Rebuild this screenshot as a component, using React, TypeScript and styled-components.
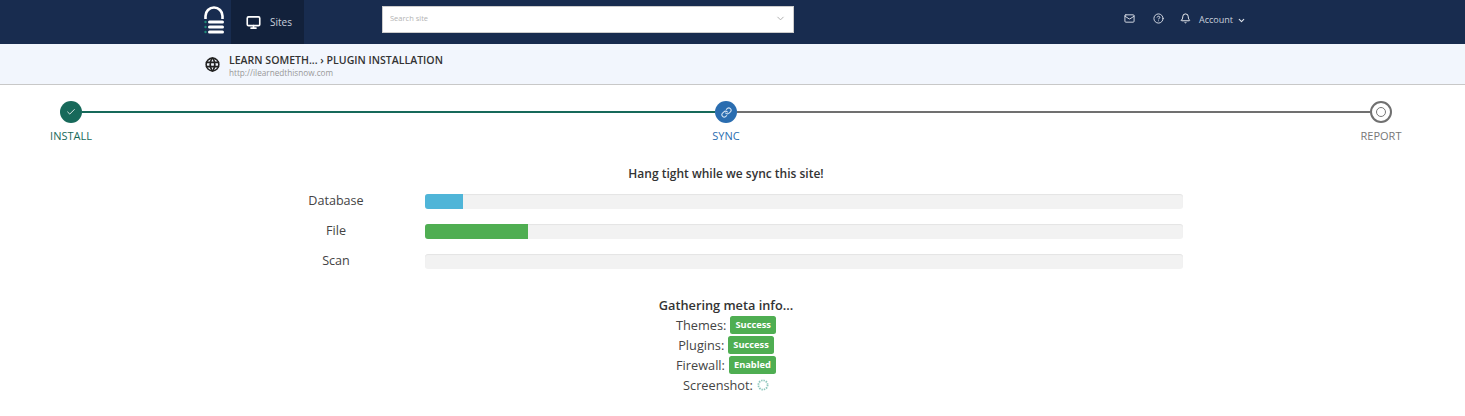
import React from 'react';
import styled, { createGlobalStyle } from 'styled-components';
import { Monitor, Mail, CircleHelp, Bell, ChevronDown, Check, Link } from 'lucide-react';
import { TbWorld } from 'react-icons/tb';

const GlobalStyle = createGlobalStyle`
  html, body { margin: 0; padding: 0; background: #fff; }
  body { font-family: "Open Sans", sans-serif; color: #333; overflow: hidden; }
`;

const TopBar = styled.header`
  height: 44px;
  background: #182c4f;
  display: flex;
  align-items: stretch;
  padding-left: 196px;
`;

const LogoCell = styled.div`
  width: 35px;
  display: flex;
  align-items: center;
  justify-content: center;
`;

const SitesTab = styled.div`
  width: 73px;
  background: #12213b;
  display: flex;
  align-items: center;
  padding-left: 15px;
  box-sizing: border-box;
  gap: 9px;
  color: #c9d0dc;
  font-size: 10px;
`;

const SearchBox = styled.div`
  margin: 6px 0 0 78px;
  width: 412px;
  height: 27px;
  box-sizing: border-box;
  background: #fff;
  border: 1px solid #ccc;
  display: flex;
  align-items: center;
  justify-content: space-between;
  padding: 0 7px 3px;
  font-size: 7.5px;
  color: #b4b4b4;
`;

const TopActions = styled.div`
  margin-left: 330px;
  display: flex;
  align-items: center;
  color: #dfe4ec;
  height: 37px;
`;

const IconSlot = styled.span<{ $w: number }>`
  width: ${(p) => p.$w}px;
  display: flex;
  margin-top: -1px;
`;

const AccountText = styled.span`
  font-size: 9px;
  color: #c9d0dc;
  margin-right: 3px;
  margin-top: 1px;
`;

const Crumbs = styled.div`
  height: 40px;
  background: #f2f6fd;
  border-bottom: 1px solid #c8c8c8;
  padding: 0 0 0 204px;
  display: flex;
  align-items: center;
  gap: 8px;
  color: #333;
`;

const CrumbText = styled.div`
  display: flex;
  flex-direction: column;
  padding-top: 3px;
`;

const CrumbTitle = styled.div`
  font-size: 10.55px;
  font-weight: 600;
  line-height: 14px;
  color: #333;
`;

const CrumbUrl = styled.div`
  font-size: 8.2px;
  line-height: 11px;
  color: #999;
`;

const Stepper = styled.div`
  display: flex;
  align-items: flex-start;
  padding: 16px 73px 0 60px;
  height: 60px;
  box-sizing: border-box;
`;

const Step = styled.div<{ $color: string }>`
  position: relative;
  width: 22px;
  flex: none;
  display: flex;
  flex-direction: column;
  align-items: center;
  color: ${(p) => p.$color};
`;

const Circle = styled.div<{ $bg: string }>`
  width: 22px;
  height: 22px;
  border-radius: 50%;
  background: ${(p) => p.$bg};
  display: flex;
  align-items: center;
  justify-content: center;
  color: #fff;
`;

const HollowCircle = styled.div`
  width: 22px;
  height: 22px;
  box-sizing: border-box;
  border-radius: 50%;
  border: 2px solid #707070;
  background: #fff;
  display: flex;
  align-items: center;
  justify-content: center;
`;

const Dot = styled.div`
  width: 10px;
  height: 10px;
  box-sizing: border-box;
  border-radius: 50%;
  border: 1px solid #777;
`;

const StepLabel = styled.div`
  font-size: 11px;
  line-height: 14px;
  margin-top: 6px;
  white-space: nowrap;
`;

const Connector = styled.div<{ $color: string }>`
  flex: 1;
  height: 2px;
  margin-top: 10px;
  background: ${(p) => p.$color};
`;

const Content = styled.div`
  width: 1452px;
`;

const Heading = styled.div`
  text-align: center;
  font-size: 12px;
  font-weight: 600;
  line-height: 17px;
  margin-top: 20px;
  color: #333;
`;

const Bars = styled.div`
  margin: 11px 0 0 300px;
  width: 883px;
  display: flex;
  flex-direction: column;
  gap: 15px;
`;

const BarRow = styled.div`
  display: grid;
  grid-template-columns: 72px 1fr;
  column-gap: 53px;
  align-items: center;
  height: 15px;
`;

const BarLabel = styled.div`
  text-align: center;
  font-size: 12.6px;
  line-height: 15px;
  padding-bottom: 2px;
  color: #444;
`;

const Track = styled.div`
  height: 15px;
  background: #f2f2f2;
  border-radius: 3px;
  box-shadow: inset 0 1px 1px rgba(0, 0, 0, 0.06);
  overflow: hidden;
`;

const Fill = styled.div<{ $color: string }>`
  height: 100%;
  background: ${(p) => p.$color};
`;

const Meta = styled.div`
  margin-top: 28px;
  display: flex;
  flex-direction: column;
  align-items: center;
  font-size: 12.75px;
  color: #333;
`;

const MetaTitle = styled.div`
  font-weight: 600;
  line-height: 18px;
  margin-bottom: 1px;
`;

const MetaRow = styled.div`
  display: flex;
  align-items: center;
  justify-content: center;
  gap: 4px;
  height: 19.9px;
  color: #444;
`;

const Badge = styled.span`
  background: #4fae52;
  color: #fff;
  font-size: 9.3px;
  font-weight: 700;
  line-height: 18px;
  height: 18px;
  padding: 0 5px;
  border-radius: 2.5px;
`;

const Logo = () => (
  <svg width="22" height="32" viewBox="0 0 22 32">
    <path d="M2.5 13 V10 a8.5 8.5 0 0 1 17 0 V13" fill="none" stroke="#fff" strokeWidth="2.6" />
    <rect x="5" y="14.5" width="16" height="3" rx="1.5" fill="#fff" />
    <rect x="5" y="19.5" width="16" height="3" rx="1.5" fill="#fff" />
    <rect x="5" y="24.5" width="16" height="3" rx="1.5" fill="#fff" />
    <circle cx="2.5" cy="16" r="1.2" fill="#1f8a78" />
    <circle cx="2.5" cy="21" r="1.2" fill="#1f8a78" />
    <circle cx="2.5" cy="26" r="1.2" fill="#1f8a78" />
  </svg>
);

const Spinner = () => (
  <svg width="12" height="12" viewBox="0 0 12 12">
    <circle cx="6" cy="6" r="4.6" fill="none" stroke="#8fc7bd" strokeWidth="1.8" strokeDasharray="1.4 1" />
  </svg>
);

const App = () => (
  <>
    <GlobalStyle />
    <TopBar>
      <LogoCell><Logo /></LogoCell>
      <SitesTab>
        <Monitor size={15} color="#fff" strokeWidth={2.6} />
        <span>Sites</span>
      </SitesTab>
      <SearchBox>
        <span>Search site</span>
        <ChevronDown size={11} color="#aaa" />
      </SearchBox>
      <TopActions>
        <IconSlot $w={29}><Mail size={11} /></IconSlot>
        <IconSlot $w={27}><CircleHelp size={11} /></IconSlot>
        <IconSlot $w={19}><Bell size={11} color="#fff" /></IconSlot>
        <AccountText>Account</AccountText>
        <ChevronDown size={9} strokeWidth={3} style={{ marginTop: 4, marginLeft: 1 }} />
      </TopActions>
    </TopBar>
    <Crumbs>
      <TbWorld size={17} color="#222" strokeWidth={2.2} />
      <CrumbText>
        <CrumbTitle>LEARN SOMETH... › PLUGIN INSTALLATION</CrumbTitle>
        <CrumbUrl>http://ilearnedthisnow.com</CrumbUrl>
      </CrumbText>
    </Crumbs>
    <Stepper>
      <Step $color="#17695a">
        <Circle $bg="#17695a"><Check size={10} /></Circle>
        <StepLabel>INSTALL</StepLabel>
      </Step>
      <Connector $color="#17695a" />
      <Step $color="#2a6db0">
        <Circle $bg="#2a6db0"><Link size={11} color="#cfe0f2" strokeWidth={2.4} /></Circle>
        <StepLabel>SYNC</StepLabel>
      </Step>
      <Connector $color="#707070" />
      <Step $color="#777">
        <HollowCircle><Dot /></HollowCircle>
        <StepLabel>REPORT</StepLabel>
      </Step>
    </Stepper>
    <Content>
      <Heading>Hang tight while we sync this site!</Heading>
      <Bars>
        <BarRow>
          <BarLabel>Database</BarLabel>
          <Track><Fill $color="#4fb5d8" style={{ width: '5%' }} /></Track>
        </BarRow>
        <BarRow>
          <BarLabel>File</BarLabel>
          <Track><Fill $color="#4fae52" style={{ width: '13.6%' }} /></Track>
        </BarRow>
        <BarRow>
          <BarLabel>Scan</BarLabel>
          <Track />
        </BarRow>
      </Bars>
      <Meta>
        <MetaTitle>Gathering meta info...</MetaTitle>
        <MetaRow>Themes: <Badge>Success</Badge></MetaRow>
        <MetaRow>Plugins: <Badge>Success</Badge></MetaRow>
        <MetaRow>Firewall: <Badge>Enabled</Badge></MetaRow>
        <MetaRow>Screenshot: <Spinner /></MetaRow>
      </Meta>
    </Content>
  </>
);

export default App;
